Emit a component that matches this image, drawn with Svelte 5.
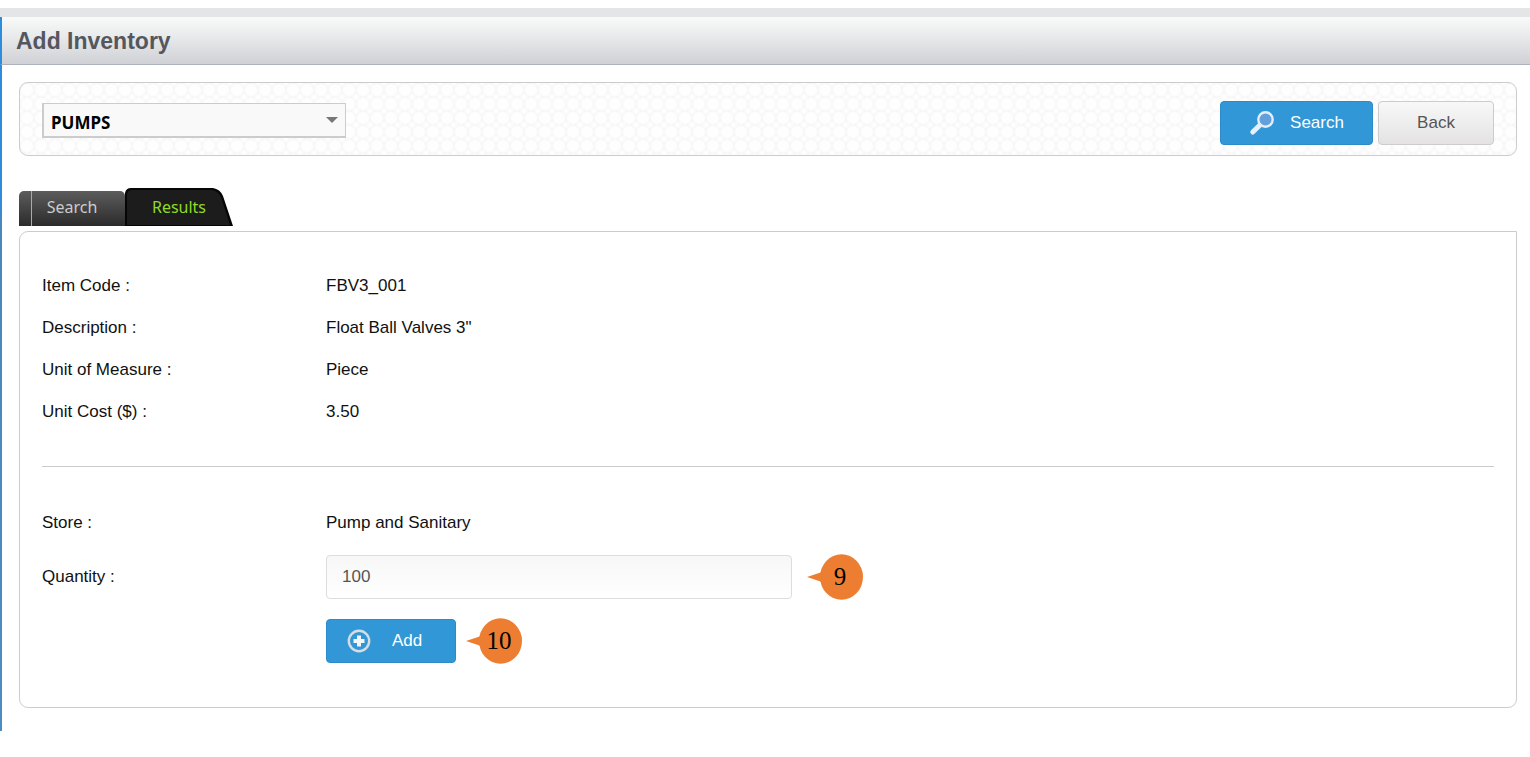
<script lang="ts">
	type Detail = {
		label: string;
		value: string;
	};

	const details: Detail[] = [
		{ label: 'Item Code :', value: 'FBV3_001' },
		{ label: 'Description :', value: 'Float Ball Valves 3"' },
		{ label: 'Unit of Measure :', value: 'Piece' },
		{ label: 'Unit Cost ($) :', value: '3.50' }
	];

	const categories = ['PUMPS'];

	let category = $state('PUMPS');
	let quantity = $state('100');
</script>

{#snippet callout(step: number)}
	<span class="callout">
		<svg class="callout__shape" viewBox="0 0 56 46" aria-hidden="true">
			<ellipse cx="34.5" cy="23" rx="21.5" ry="22.7" />
			<path d="M0 23 15 18v10z" />
		</svg>
		<span class="callout__step">{step}</span>
	</span>
{/snippet}

<div class="page">
	<main class="frame">
		<header class="title-bar">
			<h1>Add Inventory</h1>
		</header>

		<div class="body">
			<div class="toolbar">
				<div class="select">
					<select aria-label="Category" bind:value={category}>
						{#each categories as name}
							<option value={name}>{name}</option>
						{/each}
					</select>
				</div>
				<div class="actions">
					<button type="button" class="btn btn--primary btn--search">
						<svg width="26" height="26" viewBox="0 0 26 26" aria-hidden="true">
							<path d="M11.5 14.5 3.8 22" stroke="#e8f1fa" stroke-width="5" stroke-linecap="round" />
							<circle cx="16.5" cy="9.5" r="7.2" fill="#62a0dc" stroke="#e4edf8" stroke-width="2.4" />
						</svg>
						Search
					</button>
					<button type="button" class="btn btn--plain">Back</button>
				</div>
			</div>

			<nav class="tabs">
				<a href="#search" class="tab">Search</a>
				<a href="#results" class="tab tab--active" aria-current="page">
					<svg class="tab__shape" viewBox="0 0 108 38" preserveAspectRatio="none" aria-hidden="true">
						<path d="M0 38V5Q1 0 6 0H88Q95 1 98 8L108 38z" fill="#060606" />
						<path d="M2 37V6Q3 2 7 2H87Q93 3 96 9L105 37z" fill="#1c1c1c" />
					</svg>
					<span>Results</span>
				</a>
			</nav>

			<section class="card">
				<dl>
					{#each details as item}
						<div class="row">
							<dt>{item.label}</dt>
							<dd>{item.value}</dd>
						</div>
					{/each}
				</dl>

				<hr />

				<dl>
					<div class="row">
						<dt>Store :</dt>
						<dd>Pump and Sanitary</dd>
					</div>
				</dl>
				<div class="row row--field">
					<label for="quantity">Quantity :</label>
					<div class="field">
						<input id="quantity" type="text" bind:value={quantity} />
						{@render callout(9)}
					</div>
				</div>
				<div class="row row--submit">
					<div class="field field--submit">
						<button type="button" class="btn btn--primary btn--add">
							<svg width="24" height="24" viewBox="0 0 24 24" aria-hidden="true">
								<circle cx="12" cy="12" r="10.2" fill="none" stroke="#d5dce2" stroke-width="2.4" />
								<path d="M12 6.5v11M6.5 12h11" stroke="#f3f5f7" stroke-width="4" />
							</svg>
							Add
						</button>
						{@render callout(10)}
					</div>
				</div>
			</section>
		</div>
	</main>
</div>

<style>
	:global(body) {
		background: #fff;
	}

	.page {
		padding: 8px 0 26px;
		font-family: 'Liberation Sans', Arial, sans-serif;
		font-size: 17px;
		color: #111;
	}

	.frame {
		border-top: 9px solid #e4e5e7;
	}

	.title-bar {
		display: flex;
		align-items: center;
		height: 48px;
		box-sizing: border-box;
		padding: 0 14px;
		border-bottom: 1px solid #adb2bd;
		border-left: 2px solid #2f8bdc;
		background: linear-gradient(#f9fbfa, #d0d1d6);
	}

	h1 {
		margin: 0;
		font-size: 23px;
		line-height: 28px;
		color: #54575e;
	}

	.body {
		padding: 17px 13px 23px 17px;
		border: 0 solid;
		border-left-width: 2px;
		border-image: linear-gradient(#2f8bdc 20%, #4a87bb 24%, #4b8cc4) 1;
	}

	.toolbar {
		display: flex;
		justify-content: space-between;
		align-items: center;
		height: 74px;
		box-sizing: border-box;
		padding: 2px 22px 0;
		border: 1px solid #ccc;
		border-radius: 9px;
		background-color: #f7f7f7;
		background-image: radial-gradient(circle, #fefefe 5px, transparent 7px),
			radial-gradient(circle, #fff 1px, transparent 4px);
		background-position:
			0 0,
			7px 7px;
		background-size: 14px 14px;
	}

	.select {
		position: relative;
		width: 304px;
	}

	.select::after {
		content: '';
		position: absolute;
		top: 14px;
		right: 8px;
		border: 6px solid transparent;
		border-top-color: #777;
		border-bottom: 0;
		pointer-events: none;
	}

	select {
		display: block;
		width: 100%;
		height: 35px;
		padding: 6px 7px 0;
		border: 2px solid #ccc;
		border-width: 1px 1px 2px 2px;
		border-radius: 0;
		appearance: none;
		background: #f9f9f9;
		font-family: 'Noto Sans', sans-serif;
		font-size: 17px;
		font-weight: 700;
		color: #000;
	}

	.actions {
		display: flex;
		gap: 5px;
		padding-top: 6px;
	}

	.btn {
		display: flex;
		align-items: center;
		justify-content: center;
		height: 44px;
		box-sizing: border-box;
		padding: 0;
		border: 1px solid #2b8bcb;
		border-radius: 4px;
		font-family: inherit;
		font-size: 17px;
		cursor: pointer;
	}

	.btn--primary {
		background: #3197d6;
		color: #fff;
	}

	.btn--search {
		gap: 15px;
		width: 153px;
	}

	.btn--add {
		justify-content: flex-start;
		gap: 21px;
		width: 130px;
		padding-left: 20px;
	}

	.btn--plain {
		width: 116px;
		border-color: #ccc;
		background: linear-gradient(#f8f8f8, #e4e2e3);
		color: #555;
	}

	.tabs {
		display: flex;
		align-items: flex-end;
		height: 38px;
		margin: 32px 0 5px;
		font-family: 'Noto Sans', sans-serif;
		font-size: 16px;
	}

	.tab {
		display: flex;
		align-items: center;
		justify-content: center;
		width: 106px;
		height: 35px;
		box-sizing: border-box;
		padding-bottom: 3px;
		border-radius: 5px 5px 0 0;
		background: linear-gradient(90deg, transparent 12px, #aaa 12px, #aaa 13px, transparent 13px),
			linear-gradient(#5c5c5c, #2b2b2b);
		color: #ccc;
		text-decoration: none;
	}

	.tab--active {
		position: relative;
		width: 108px;
		height: 38px;
		padding-bottom: 0;
		background: none;
		color: #8fdc22;
	}

	.tab__shape {
		position: absolute;
		inset: 0;
		width: 100%;
		height: 100%;
	}

	.tab--active span {
		position: relative;
	}

	.card {
		padding: 33px 22px 44px;
		border: 1px solid #ccc;
		border-radius: 9px 0 9px 9px;
	}

	dl,
	dd {
		margin: 0;
	}

	.row {
		display: grid;
		grid-template-columns: 284px 1fr;
		align-items: center;
		min-height: 42px;
	}

	.row--field {
		margin-top: 11px;
	}

	.row--submit {
		margin-top: 20px;
	}

	hr {
		height: 1px;
		margin: 33px 0 35px;
		border: 0;
		background: #ccc;
	}

	.field {
		display: flex;
		align-items: center;
		gap: 15px;
		height: 44px;
	}

	.field--submit {
		grid-column: 2;
		gap: 10px;
	}

	input {
		width: 466px;
		height: 44px;
		box-sizing: border-box;
		padding: 0 15px;
		border: 1px solid #ddd;
		border-radius: 4px;
		background: linear-gradient(#f7f7f7, #fff);
		font-family: inherit;
		font-size: 17px;
		color: #555;
	}

	.callout {
		position: relative;
		display: flex;
		align-items: center;
		justify-content: center;
		width: 56px;
		height: 46px;
		box-sizing: border-box;
		padding-left: 10px;
		font-family: 'Liberation Serif', serif;
		font-size: 25px;
		color: #000;
	}

	.callout__shape {
		position: absolute;
		inset: 0;
		fill: #ed7d31;
	}

	.callout__step {
		position: relative;
	}
</style>
